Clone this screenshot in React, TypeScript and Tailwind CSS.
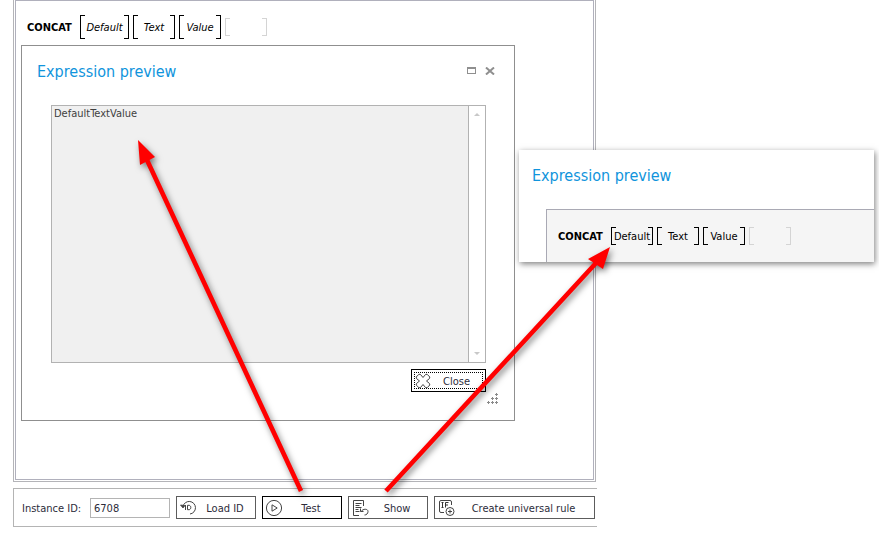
import React from "react";

type Slot = { text: string; className: string };

function Bracket({ text, tall, muted, className }: { text: string; tall?: boolean; muted?: boolean; className: string }) {
  const edge = muted ? "border-[#d4d4d4]" : "border-black";
  const height = tall ? "h-6" : "h-[18px]";
  return (
    <span className={`flex items-center justify-between ${height} ${className}`}>
      <span className={`h-full w-[5px] shrink-0 border-y border-l ${edge}`} />
      <span className="-mx-1 whitespace-nowrap pt-[2px]">{text}</span>
      <span className={`h-full w-[5px] shrink-0 border-y border-r ${edge}`} />
    </span>
  );
}

function Expression({ slots, tall }: { slots: Slot[]; tall?: boolean }) {
  return (
    <div className="flex h-6 items-center text-[11px] leading-4 text-black">
      <strong className="w-[53px] pt-[2px] font-bold">CONCAT</strong>
      <span className={`flex items-center gap-1 ${tall ? "italic" : ""}`}>
        {slots.map((slot) => (
          <Bracket key={slot.text} text={slot.text} tall={tall} className={slot.className} />
        ))}
        <Bracket text="" muted className="w-[42px]" />
      </span>
    </div>
  );
}

function ToolButton({ label, icon, className }: { label: string; icon: React.ReactNode; className: string }) {
  return (
    <button type="button" className={`flex h-[23px] shrink-0 items-center border bg-white px-[2px] ${className}`}>
      {icon}
      <span className="flex-1 pt-[2px] text-center">{label}</span>
    </button>
  );
}

const iconProps = { width: 18, height: 18, viewBox: "0 0 18 18", fill: "none", stroke: "#444", strokeWidth: 1, "aria-hidden": true } as const;

function LoadIcon() {
  return (
    <svg {...iconProps}>
      <path d="M4 7.500A6.300 6.300 0 1 1 11 15" />
      <path d="M1.500 6 4 9 6 6.500z" fill="#444" strokeWidth="0.8" />
      <path d="M6.500 6v5M8.500 6.300v4.400h1.500c2.400 0 2.400-4.400 0-4.400z" />
    </svg>
  );
}

function PlayIcon() {
  return (
    <svg {...iconProps}>
      <circle cx="9" cy="9" r="7.6" />
      <path d="M7 5.800v6.400L12.200 9z" />
    </svg>
  );
}

function ShowIcon() {
  return (
    <svg {...iconProps}>
      <path d="M8 16.500H2.500v-15h10V7M4.500 4.500h6M4.500 6.500h4M4.500 8.500h6M4.500 10.500h3M4.500 12.500h4M10 12.500C12 9.500 17 9.500 17 12.500c0 2-1.500 3.500-3.500 3.500M9.500 9.500v3h3" />
    </svg>
  );
}

function RuleIcon() {
  return (
    <svg {...iconProps}>
      <path d="M7 13.500H4A1.500 1.500 0 0 1 2.500 12V3A1.500 1.500 0 0 1 4 1.500h9A1.500 1.500 0 0 1 14.500 3v3" />
      <path d="M5.500 3.500v5M8.500 8.500v-5h3M8.500 6h2.500M4.500 3.500h2M4.500 8.500h2" stroke="#333" />
      <circle cx="13" cy="12.500" r="4" />
      <path d="M13 10.500v4M11 12.500h4" />
    </svg>
  );
}

function CrossIcon() {
  return (
    <svg width="16" height="16" viewBox="0 0 16 16" fill="none" stroke="#444" strokeLinejoin="round" aria-hidden="true">
      <path d="M4 1.200 5.500 1.500 8 4.500 10.500 1.500 12 1.200 14.800 4 14.500 5.500 11.500 8 14.500 10.500 14.800 12 12 14.800 10.500 14.500 8 11.500 5.500 14.500 4 14.800 1.200 12 1.500 10.500 4.500 8 1.500 5.500 1.200 4z" />
    </svg>
  );
}

function Grip() {
  return (
    <svg className="block" width="12" height="12" viewBox="0 0 12 12" fill="none" stroke="#8a8a8a" aria-hidden="true">
      <path d="M8 1.500h3M9.500 0v3M4 5.500h3M5.500 4v3M8 5.500h3M9.500 4v3M0 9.500h3M1.500 8v3M4 9.500h3M5.500 8v3M8 9.500h3M9.500 8v3" />
    </svg>
  );
}

function Preview() {
  return (
    <section className="ml-[5px] mr-[78px] border border-[#8f8f8f] bg-white px-[15px] pb-[15px]">
      <header className="flex h-[59px] items-center justify-between">
        <h2 className="pb-2 text-base text-[#1094dc]">Expression preview</h2>
        <div className="flex items-center gap-[9px] pb-[10px] pr-1">
          <button type="button" aria-label="Maximize" className="h-[7px] w-[9px] border border-t-2 border-[#8f8f8f]" />
          <button type="button" aria-label="Close preview">
            <svg className="block" width="10" height="8" viewBox="0 0 10 8" stroke="#8f8f8f" strokeWidth="2" aria-hidden="true">
              <path d="M1 0.500 9 7.500M9 0.500 1 7.500" />
            </svg>
          </button>
        </div>
      </header>
      <div className="ml-[14px] mr-[13px] flex h-[258px] border border-[#b2b2b2] bg-[#f0f0f0]">
        <textarea readOnly aria-label="Result" defaultValue="DefaultTextValue" className="block min-w-0 flex-1 resize-none px-[2px] text-[11px] leading-[15px] text-[#404040] outline-none" />
        <div className="flex w-[17px] flex-col items-center justify-between border-l border-[#b2b2b2] bg-white py-[7px]">
          <svg width="6" height="3" viewBox="0 0 6 3" fill="#c8c8c8" aria-hidden="true"><path d="M3 0 6 3H0z" /></svg>
          <svg width="6" height="3" viewBox="0 0 6 3" fill="#c8c8c8" aria-hidden="true"><path d="M0 0h6L3 3z" /></svg>
        </div>
      </div>
      <div className="mr-[13px] mt-[6px] flex justify-end">
        <button type="button" className="flex h-[23px] w-[75px] items-center border border-black bg-white p-[2px]">
          <span className="flex h-full w-full items-center border border-dotted border-black">
            <CrossIcon />
            <span className="flex-1 pt-[2px] text-center">Close</span>
          </span>
        </button>
      </div>
      <div className="flex justify-end pt-px"><Grip /></div>
    </section>
  );
}

export default function App() {
  return (
    <div className="relative flex min-h-screen bg-white pl-[13px] font-['DejaVu_Sans_Condensed','DejaVu_Sans',sans-serif] text-[11px] leading-4 text-[#2c2c3a]">
      <main className="min-w-0 flex-1">
        <div className="mr-px border-x border-b border-[#b4b4b8] px-px pb-px">
          <div className="border border-[#b0b0bc] pb-[58px]">
            <div className="pb-[6px] pl-[11px] pt-[14px]">
              <Expression tall slots={[{ text: "Default", className: "w-[49px]" }, { text: "Text", className: "w-[42px]" }, { text: "Value", className: "w-[42px]" }]} />
            </div>
            <Preview />
          </div>
        </div>
        <form className="mt-[6px] flex h-[39px] items-center border-y border-l border-[#b4b4b4] pl-2" onSubmit={(e) => e.preventDefault()}>
          <label htmlFor="instance" className="w-[68px] whitespace-nowrap pt-[2px]">Instance ID:</label>
          <input id="instance" defaultValue="6708" className="mr-[6px] h-5 w-20 border border-[#b4b4b4] px-[3px] pt-[2px] outline-none" />
          <div className="flex min-w-0 flex-1 gap-[6px] pr-[2px]">
            <ToolButton label="Load ID" icon={<LoadIcon />} className="w-20 border-[#5c5c5c]" />
            <ToolButton label="Test" icon={<PlayIcon />} className="w-20 border-black" />
            <ToolButton label="Show" icon={<ShowIcon />} className="w-20 border-[#5c5c5c]" />
            <ToolButton label="Create universal rule" icon={<RuleIcon />} className="grow border-[#5c5c5c]" />
          </div>
        </form>
      </main>
      <div className="w-[282px] shrink-0" />
      <aside className="absolute right-[5px] top-[150px] w-[355px] bg-white pl-[13px] shadow-[1px_2px_6px_rgba(0,0,0,0.5)]">
        <h2 className="pb-[21px] pt-[14px] text-base text-[#1094dc]">Expression preview</h2>
        <div className="ml-[14px] border-l border-t border-[#a9a9b4] bg-[#f5f5f5] pb-[14px] pl-[11px] pt-[14px]">
          <Expression slots={[{ text: "Default", className: "w-[42px]" }, { text: "Text", className: "w-[42px]" }, { text: "Value", className: "w-[42px]" }]} />
        </div>
      </aside>
      <svg className="pointer-events-none absolute left-0 top-0 drop-shadow-[2px_3px_3px_rgba(0,0,0,0.5)]" width="879" height="533" viewBox="0 0 879 533" fill="#f00" stroke="#f00" aria-hidden="true">
        <path d="M301 491 147 160M386 491 596 263" strokeWidth="4.6" />
        <path d="M138 140 155 157 140 165zM610 247 603 269 588 259z" stroke="none" />
      </svg>
    </div>
  );
}
